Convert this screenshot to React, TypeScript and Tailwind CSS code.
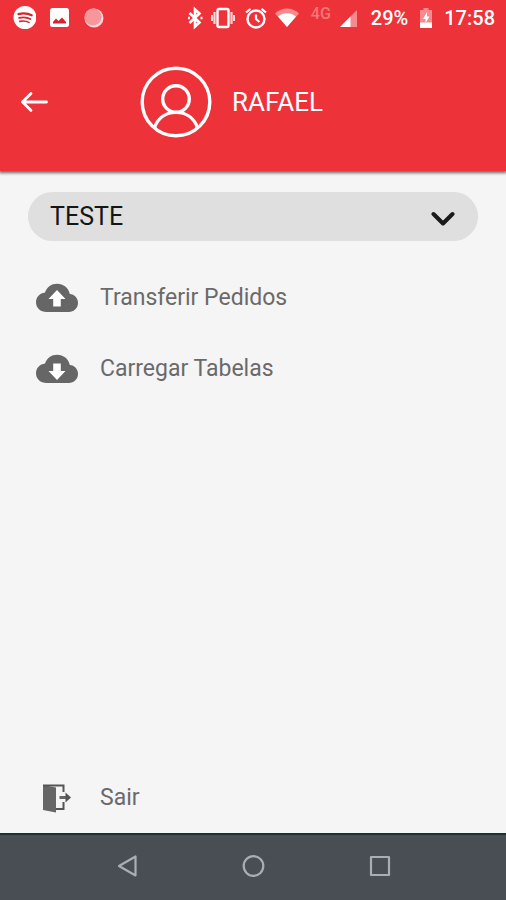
import type { ReactNode } from "react";

function StatusBar() {
  return (
    <div className="flex h-9 items-center justify-between pl-3 pr-[11px] text-white">
      <div className="flex items-center gap-3">
        <svg className="size-6" viewBox="0 0 24 24" aria-label="Spotify">
          <circle cx="13" cy="11.500" r="11.500" fill="#fff" />
          <g fill="none" stroke="#d8232c" strokeLinecap="round">
            <path d="M6.500 8.100c4.500-1.300 9.500-.8 13.200 1.200" strokeWidth="2.200" />
            <path d="M7.200 11.900c4-1 8-.6 11.200 1.100" strokeWidth="1.900" />
            <path d="M7.800 15.400c3.300-.8 6.500-.5 9.200 1" strokeWidth="1.600" />
          </g>
        </svg>
        <svg className="size-6" viewBox="0 0 24 24" aria-label="Galeria">
          <rect x="2" y="2" width="19" height="19" rx="2.500" fill="#fff" />
          <path d="M5 17.500v-1.500l3-3.500 2.500 2.500 3.500-3.500 4 4.500v1.500z" fill="#d8232c" />
        </svg>
        <svg className="size-5" viewBox="0 0 20 20" aria-label="Notificação">
          <circle cx="10" cy="10" r="9.500" fill="#fbd5d7" />
          <circle cx="9" cy="9" r="8.500" fill="#f5979b" />
        </svg>
      </div>

      <div className="flex items-center gap-3">
        <div className="flex items-center gap-2">
          <svg className="h-6 w-4" viewBox="0 0 16 24" aria-label="Bluetooth">
            <path d="M2.500 7l10 9.500L8 20.500V3.500l4.500 4-10 9.500" fill="none" stroke="#fff" strokeWidth="2.600" />
            <path d="M1 12h2M13.500 12h2" stroke="#fff" strokeWidth="2.400" />
          </svg>
          <svg className="size-6" viewBox="0 0 24 24" aria-label="Vibrar">
            <rect x="6.500" y="3" width="11" height="18" rx="1.500" fill="none" stroke="#fff" strokeWidth="2.400" />
            <path d="M3.500 6v12M20.500 6v12" stroke="#fff" strokeWidth="2.200" opacity=".8" />
            <path d="M1 9v6M23 9v6" stroke="#fff" strokeWidth="2" opacity=".8" />
          </svg>
          <svg className="size-6" viewBox="0 0 24 24" aria-label="Alarme">
            <circle cx="13" cy="13" r="8.500" fill="none" stroke="#fff" strokeWidth="2.400" />
            <path d="M13 8.500V13l3.500 3M3 6.500L7.500 2.800M23 6.500L18.500 2.800" fill="none" stroke="#fff" strokeWidth="2.200" />
          </svg>
          <svg className="size-6" viewBox="0 0 24 24" aria-label="Wi-Fi">
            <path d="M12 21L0 7.500C7 .8 17 .8 24 7.500z" fill="#f68a8e" />
            <path d="M12 21L3 10.500c5-4.500 13-4.500 18 0z" fill="#fff" />
          </svg>
        </div>
        <div className="flex items-center gap-2">
          <span className="pb-2 font-['Roboto',sans-serif] text-base font-medium leading-4 text-[#f7777c]">4G</span>
          <svg className="size-5" viewBox="0 0 20 20" aria-label="Sinal">
            <path d="M18 2v17H1z" fill="#f68a8e" />
            <path d="M11.500 8.500V19H1z" fill="#fff" />
          </svg>
        </div>
        <span className="text-xl font-medium">29%</span>
        <svg className="h-5 w-3" viewBox="0 0 12 20" aria-label="Bateria">
          <path d="M3.500 0h5v2H12v18H0V2h3.500z" fill="#f68a8e" />
          <path d="M0 14.500h12V20H0zM7 4L3 11h2.500v4L9.500 8.500H7z" fill="#fff" />
        </svg>
        <span className="text-xl font-medium">17:58</span>
      </div>
    </div>
  );
}

function Cloud({ children }: { children: ReactNode }) {
  return (
    <svg className="h-[30px] w-[42px]" viewBox="0 0 42 30" aria-hidden="true">
      <path
        d="M10.500 29C4.500 29 0 25 0 19.300 0 14 3.800 10 9 9.400 11 4 15.500.8 21 .8c6.500 0 11.500 4.200 12.800 10.200C38.500 11.300 42 15 42 19.800 42 25 38 29 32.800 29z"
        fill="#666"
      />
      {children}
    </svg>
  );
}

function MenuItem({ icon, label }: { icon: ReactNode; label: string }) {
  return (
    <button type="button" className="flex h-[71px] w-full items-center gap-[22px] px-9 text-left">
      <span className="flex w-[42px] justify-center">{icon}</span>
      <span className="text-[23px] leading-7 text-[#6a6a6a]">{label}</span>
    </button>
  );
}

export default function App() {
  return (
    <div className="flex min-h-screen flex-col bg-[#f5f5f5] font-['Roboto',sans-serif]">
      <header className="bg-[#ee3239] pb-[33px] shadow-[0_1px_3px_1px_#666]">
        <StatusBar />
        <div className="flex items-center pl-5 pt-[30px] text-white">
          <button type="button" aria-label="Voltar" className="mr-[92px]">
            <svg className="h-6 w-7" viewBox="0 0 28 24" fill="none" stroke="currentColor" strokeWidth="2.800" strokeLinecap="round" strokeLinejoin="round">
              <path d="M26.500 12H2.500M11 3.500L2.500 12l8.500 8.500" />
            </svg>
          </button>
          <svg className="size-[72px]" viewBox="0 0 72 72" fill="none" stroke="currentColor" strokeWidth="3.400" aria-hidden="true">
            <circle cx="36" cy="36" r="33.800" />
            <circle cx="36" cy="33" r="13.300" />
            <path d="M14.500 61.500C18 52 26 46.400 36 46.400S54 52 57.500 61.500" />
          </svg>
          <h1 className="ml-5 text-[26px] leading-8">RAFAEL</h1>
        </div>
      </header>

      <main className="flex flex-1 flex-col pt-[21px]">
        <div className="relative mx-7 mb-[21px]">
          <select
            aria-label="Empresa"
            className="h-[49px] w-full appearance-none rounded-full bg-[#dfdfdf] px-[22px] text-[25px] text-[#151515]"
          >
            <option>TESTE</option>
          </select>
          <svg className="pointer-events-none absolute right-[23px] top-[19px] h-4 w-6" viewBox="0 0 24 16" fill="none" stroke="#1b1b1b" strokeWidth="4" strokeLinecap="round" strokeLinejoin="round" aria-hidden="true">
            <path d="M2.500 3L12 12.500 21.500 3" />
          </svg>
        </div>
        <nav className="flex flex-1 flex-col">
          <MenuItem
            label="Transferir Pedidos"
            icon={
              <Cloud>
                <path d="M21 7l8.500 9h-4.700v7.500h-7.600V16h-4.700z" fill="#fff" />
              </Cloud>
            }
          />
          <MenuItem
            label="Carregar Tabelas"
            icon={
              <Cloud>
                <path d="M21 26l8.500-9h-4.700V9.500h-7.600V17h-4.700z" fill="#fff" />
              </Cloud>
            }
          />
          <div className="mt-auto">
            <MenuItem
              label="Sair"
              icon={
                <svg className="h-[30px] w-[30px]" viewBox="0 0 30 30" aria-hidden="true">
                  <path d="M1 2L14 4.500v25L1 27z" fill="#666" />
                  <path d="M1 2.500h20.500V9M21.500 19v7H14" fill="none" stroke="#555" strokeWidth="2" />
                  <path d="M17.500 14.500h7" stroke="#666" strokeWidth="3" />
                  <path d="M23.500 9.500l5.500 5-5.500 5z" fill="#555" />
                </svg>
              }
            />
          </div>
        </nav>
      </main>

      <footer className="grid h-[67px] grid-cols-3 items-center justify-items-center border-t-2 border-[#1d3130] bg-[#484e53] px-16 pb-[3px] text-[#a9aeb0]">
        <button type="button" aria-label="Voltar ao anterior">
          <svg className="size-6" viewBox="0 0 24 24" fill="none" stroke="currentColor" strokeWidth="2.200" strokeLinejoin="round">
            <path d="M20.500 2.500v19L4 12z" />
          </svg>
        </button>
        <button type="button" aria-label="Início">
          <svg className="size-6" viewBox="0 0 24 24" fill="none" stroke="currentColor" strokeWidth="2.200">
            <circle cx="12.500" cy="12" r="9.800" />
          </svg>
        </button>
        <button type="button" aria-label="Recentes">
          <svg className="size-6" viewBox="0 0 24 24" fill="none" stroke="currentColor" strokeWidth="2.200" strokeLinejoin="round">
            <rect x="4" y="3" width="18" height="18" />
          </svg>
        </button>
      </footer>
    </div>
  );
}
